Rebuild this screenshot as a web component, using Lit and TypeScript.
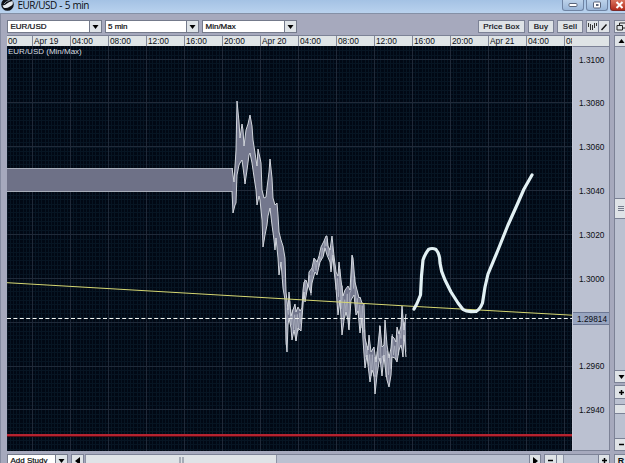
import { LitElement, html, svg, css } from 'lit';
import { customElement, property } from 'lit/decorators.js';

type Point = [number, number];

const TIMES = ['00', 'Apr 19', '04:00', '08:00', '12:00', '16:00', '20:00', 'Apr 20', '04:00',
  '08:00', '12:00', '16:00', '20:00', 'Apr 21', '04:00', '08:00'];

const PRICES = ['1.3100', '1.3080', '1.3060', '1.3040', '1.3020', '1.3000', '', '1.2960', '1.2940'];

// upper and lower edge of the min/max band, in window coordinates
const MAX: Point[] = [[232, 168], [234, 182], [236, 150], [237, 101], [239, 122], [240, 138], [242, 124],
  [243, 130], [244, 146], [246, 130], [248, 124], [250, 115], [252, 126], [253, 140], [255, 153],
  [257, 166], [258, 149], [260, 158], [261, 163], [262, 190], [264, 198], [266, 197], [267, 188], [269, 172],
  [270, 159], [272, 178], [273, 198], [275, 205], [277, 203], [278, 215], [279, 232], [281, 240],
  [283, 246], [285, 258], [286, 292], [288, 310], [289, 292], [291, 316], [293, 310], [295, 304],
  [296, 312], [298, 307], [300, 311], [302, 308], [303, 290], [304, 282], [306, 280], [308, 286],
  [309, 272], [312, 268], [314, 258], [317, 262], [319, 256], [321, 247], [324, 241], [326, 236],
  [327, 236], [328, 246], [330, 250], [332, 236], [334, 256], [336, 272], [338, 276], [339, 262],
  [341, 280], [343, 296], [345, 290], [348, 286], [350, 290], [352, 255], [353, 258], [355, 282],
  [357, 290], [359, 298], [360, 297], [362, 303], [364, 304], [365, 338], [368, 350], [369, 335],
  [371, 352], [374, 347], [376, 362], [378, 345], [380, 326], [382, 347], [384, 345], [385, 320],
  [387, 345], [389, 358], [391, 348], [392, 336], [394, 338], [396, 342], [397, 327], [399, 334],
  [401, 326], [402, 306], [404, 330], [406, 314]];

const MIN: Point[] = [[232, 191], [233, 213], [235, 205], [236, 203], [237, 175], [239, 165], [240, 163],
  [242, 160], [244, 175], [245, 184], [247, 170], [249, 155], [250, 153], [252, 163], [254, 177],
  [256, 190], [257, 205], [259, 196], [260, 200], [262, 220], [263, 247], [265, 235], [267, 225],
  [268, 216], [270, 208], [272, 225], [274, 240], [275, 250], [276, 238], [278, 258], [279, 275],
  [281, 262], [283, 288], [285, 300], [286, 340], [287, 352], [288, 325], [289, 318], [291, 328],
  [292, 340], [294, 330], [296, 341], [298, 328], [301, 331], [303, 305], [304, 292], [305, 302],
  [308, 285], [311, 293], [312, 283], [315, 272], [317, 275], [320, 262], [323, 257], [325, 248],
  [327, 255], [330, 262], [331, 272], [333, 255], [334, 270], [336, 288], [338, 315], [340, 300],
  [342, 335], [344, 320], [346, 312], [348, 320], [349, 330], [351, 300], [354, 295], [356, 315],
  [358, 311], [360, 333], [362, 318], [363, 340], [365, 368], [367, 355], [368, 365], [370, 382],
  [372, 370], [374, 375], [375, 394], [377, 375], [379, 362], [380, 358], [382, 376], [384, 355],
  [385, 366], [387, 380], [389, 387], [391, 375], [392, 357], [395, 358], [397, 362], [399, 350],
  [401, 345], [402, 350], [403, 357], [404, 335], [406, 357]];

const valueAt = (points: Point[], x: number) => {
  const i = Math.max(1, points.findIndex(p => p[0] >= x));
  const [x0, y0] = points[i - 1];
  const [x1, y1] = points[i];
  return y0 + (y1 - y0) * (x - x0) / (x1 - x0);
};

const toPath = (points: Point[]) => points.map(p => p.join(',')).join(' ');

// tick noise that bounces between both edges
const ticks = () => {
  const points: Point[] = [];
  for (let x = 286, i = 0; x <= 406; x += 1.25, i++) {
    const top = valueAt(MAX, x);
    const bottom = valueAt(MIN, x);
    const inset = (bottom - top) * (((i * 7) % 5) * 0.11 - 0.1);
    points.push([x, i % 2 ? top + inset : bottom - inset]);
  }
  return points;
};

@customElement('select-box')
class SelectBox extends LitElement {
  @property() label = '';

  render() {
    return html`
      <span class="value">${this.label}</span>
      <span class="drop"><svg width="7" height="4"><path d="M0.5 0H6.5L3.5 4Z"/></svg></span>
    `;
  }

  static styles = css`
    :host {
      display: flex;
      box-sizing: border-box;
      height: 13px;
      border: 1px solid #747a8b;
      background: #fff;
      overflow: hidden;
    }
    .value {
      flex: 1;
      padding-left: 2.500px;
      line-height: 12px;
      white-space: nowrap;
      -webkit-text-stroke: 0.2px #000;
    }
    .drop {
      display: flex;
      align-items: center;
      justify-content: center;
      width: 11px;
      border-left: 1px solid #747a8b;
      background: #dfe4e8;
    }
  `;
}

@customElement('app-root')
class AppRoot extends LitElement {

  renderGrid() {
    const lines = [];
    for (let x = 32 - 38; x < 572; x += 38 / 12) {
      lines.push(svg`<path class="minor" d="M${Math.round(x) + 0.5} 46V451"/>`);
    }
    for (let y = 59 - 4.38 * 2; y < 451; y += 4.38) {
      lines.push(svg`<path class="minor" d="M7 ${Math.round(y) + 0.5}H572"/>`);
    }
    for (let x = 32; x < 572; x += 38) {
      lines.push(svg`<path class="major" d="M${x + 0.5} 46V451"/>`);
    }
    for (let i = 0; i < 9; i++) {
      lines.push(svg`<path class="major" d="M7 ${Math.round(58.6 + i * 43.85) + 0.5}H572"/>`);
    }
    return lines;
  }

  renderChart() {
    const outline = [...MAX, ...[...MIN].reverse()];
    return html`
      <svg class="plot" width="565" height="405" viewBox="7 46 565 405">
        ${this.renderGrid()}
        <rect x="6" y="168" width="227" height="23" fill="#6e7187"/>
        <path d="M7 168.5H233M7 191.5H232" stroke="#a7adb9"/>
        <polygon points=${toPath(outline)} fill="#73778d"/>
        <polyline class="ticks" points=${toPath(ticks())}/>
        <polyline class="edge" points=${toPath(MAX)}/>
        <polyline class="edge" points=${toPath(MIN)}/>
        <path d="M7 282.7L260 297.4L400 305.6L572 315.2" stroke="#d6d772" fill="none"/>
        <path d="M7 318.5H572" stroke="#f4f6f2" stroke-dasharray="4 2.4"/>
        <path d="M7 436.5H572" stroke="#520b16"/>
        <path d="M7 435H572" stroke="#b5232f" stroke-width="2"/>
        <path class="forecast" d="M414 309L417 303.500L420.500 295L421.500 276L423 260
          Q425 254 428.500 249.500Q432 247.500 436 249.500Q440 254 440 263Q441 272 445 280
          L451 292L458 303L463 309.500Q466 311.500 471 311.700L476 311.500Q480 309.500 482.500 303
          L485 287L488 274L498 250L508 225L517 205L524 189L532 175"/>
      </svg>
    `;
  }

  render() {
    return html`
      <div class="title">
        <svg class="logo" width="14" height="13" viewBox="0 0 14 13">
          <circle cx="6.500" cy="4.500" r="6.300" fill="#101319"/>
          <path d="M1.500 5.500Q4 5.500 6 3.500T11.500 1Q13 5 9 6.500Q5 9 2.500 7.500Z" fill="#e3e9ef"/>
          <path d="M3 4Q5 1 9 0" stroke="#8090a0" fill="none"/>
        </svg>
        <span class="caption">EUR/USD - 5 min</span>
        <span class="win"><svg width="10" height="6"><rect x="1" y="1.500" width="8" height="3" rx="1" fill="#fff" stroke="#59657b"/></svg></span>
        <span class="win"><svg width="10" height="8"><rect x="1.500" y="1" width="7" height="6" rx="1" fill="#fff" stroke="#59657b"/><rect x="4" y="3" width="2.500" height="2" fill="#59657b"/></svg></span>
        <span class="win close"><svg width="9" height="8"><path d="M1.500 1L7.500 7M7.500 1L1.500 7" stroke="#fff" stroke-width="2"/></svg></span>
      </div>
      <div class="body">
        <div class="main">
          <div class="toolbar">
            <select-box class="pick" label="EUR/USD"></select-box>
            <select-box class="pick" label="5 min"></select-box>
            <select-box class="pick" label="Min/Max"></select-box>
            <div class="actions">
              <span class="btn price">Price Box</span>
              <span class="btn">Buy</span>
              <span class="btn">Sell</span>
              <span class="tools">
                <span class="tool"><svg width="10" height="9"><path d="M1.500 1V5M3.500 2V8M5.500 3V8M7.500 1V6M9.500 1V4" stroke="#333"/></svg></span>
                <span class="tool"><svg width="8" height="8"><path d="M1.500 7L6.500 1.500" stroke="#111" stroke-width="1.400"/></svg></span>
              </span>
            </div>
          </div>
          <div class="times">
            ${TIMES.map(t => html`<span class="time">${t}</span>`)}
          </div>
          <div class="corner"></div>
          <div class="chart">
            ${this.renderChart()}
            <span class="study">EUR/USD (Min/Max)</span>
          </div>
          <div class="prices">
            ${PRICES.map(p => html`<span class="tick">${p}</span>`)}
            <span class="last">1.29814</span>
          </div>
          <div class="bottom">
            <select-box class="add" label="Add Study"></select-box>
            <span class="key left"><svg width="5" height="8"><path d="M5 0V8L0 4Z"/></svg></span>
            <span class="track"><span class="thumb"><svg width="5" height="7"><path d="M1 0V7M4 0V7" stroke="#6d7486"/></svg></span></span>
            <span class="key right"><svg width="5" height="8"><path d="M0 0V8L5 4Z"/></svg></span>
            <span class="key minus"><svg width="7" height="7"><path d="M1 3.500H6" stroke="#000" stroke-width="1.500"/></svg></span>
            <span class="track zoom"><span class="grip"></span></span>
            <span class="key plus"><svg width="7" height="7"><path d="M1 3.500H6M3.500 1V6" stroke="#000" stroke-width="1.500"/></svg></span>
          </div>
        </div>
        <div class="side">
          <span class="cell popup"><svg width="10" height="9"><path d="M3.500 1H9.500V6H3.500Z" fill="#e1e5e8" stroke="#222"/><path d="M1 3.500H6.500V8H1Z" fill="#e1e5e8" stroke="#222"/></svg></span>
          <span class="cell up"><svg width="7" height="4"><path d="M0.500 4H6.500L3.500 0Z"/></svg></span>
          <span class="vtrack above"></span>
          <span class="cell vthumb"><svg width="6" height="6"><path d="M0 0.500H6M0 2.500H6M0 4.500H6" stroke="#747a8b"/></svg></span>
          <span class="vtrack below"></span>
          <span class="cell down"><svg width="7" height="4"><path d="M0.500 0H6.500L3.500 4Z"/></svg></span>
          <span class="cell vplus"><svg width="7" height="7"><path d="M1 3.500H6M3.500 1V6" stroke="#000" stroke-width="1.500"/></svg></span>
          <span class="vtrack short"></span>
          <span class="cell vgrip"></span>
          <span class="vtrack rest"></span>
          <span class="cell vminus"><svg width="7" height="7"><path d="M1 3.500H6" stroke="#000" stroke-width="1.500"/></svg></span>
          <span class="cell reset">R</span>
        </div>
      </div>
    `;
  }

  static styles = css`
    :host {
      display: flex;
      flex-direction: column;
      width: 625px;
      height: 463px;
      overflow: hidden;
      background: #a6a9bd;
      color: #0c0e12;
      font: 8px "Liberation Sans", Arial, sans-serif;
    }
    svg {
      display: block;
      flex: none;
    }
    .title {
      display: flex;
      flex: none;
      box-sizing: border-box;
      height: 14px;
      padding-left: 1px;
      background: linear-gradient(#a4c2e4, #b9d2ee);
      border-bottom: 1px solid #8490a6;
    }
    .caption {
      flex: 1;
      padding-left: 2.500px;
      font: 10px/11px "Open Sans", "Noto Sans", sans-serif;
      letter-spacing: -0.5px;
      word-spacing: 0.5px;
    }
    .win {
      display: flex;
      align-items: center;
      justify-content: center;
      box-sizing: border-box;
      width: 22px;
      height: 11px;
      margin-right: 2px;
      border: 1px solid #6f84a4;
      border-top: 0;
      border-radius: 0 0 3px 3px;
      background: linear-gradient(#bcd2ea, #9ab6d8);
    }
    .close {
      width: 15px;
      margin-right: 0;
      padding-left: 3px;
      border-color: #7c2b2b;
      border-right: 0;
      border-radius: 0 0 0 3px;
      background: linear-gradient(#d9735e, #b32b1c);
    }
    .body {
      display: flex;
      flex: 1;
      gap: 4px;
      padding: 6px 0 0 6px;
      border-left: 1px solid #858ba0;
    }
    .main {
      display: grid;
      flex: none;
      grid-template-columns: 565px 38px;
      grid-template-rows: 15px 11px 405px 12px;
    }
    .toolbar {
      display: flex;
      grid-column: 1 / 3;
      gap: 3px;
    }
    .pick {
      width: 94.500px;
    }
    .actions {
      display: flex;
      gap: 3px;
      margin-left: auto;
    }
    .btn, .tools, .key, .cell {
      box-sizing: border-box;
      border: 1px solid #7c8296;
      background: #dfe3e7;
      text-align: center;
    }
    .btn {
      width: 26px;
      height: 13px;
      line-height: 12px;
      letter-spacing: 0.25px;
      -webkit-text-stroke: 0.2px #0c0e12;
    }
    .price {
      width: 47px;
    }
    .tools {
      display: flex;
      width: 24px;
      height: 13px;
    }
    .tool {
      display: flex;
      flex: 1;
      align-items: center;
      justify-content: center;
    }
    .tool + .tool {
      border-left: 1px solid #7c8296;
    }
    .times {
      display: flex;
      box-sizing: border-box;
      overflow: hidden;
      border-top: 1px solid #7c8296;
      background: #dfe4e6;
    }
    .time {
      flex: none;
      box-sizing: border-box;
      width: 38px;
      padding-left: 1px;
      border-left: 1px solid #83899a;
      font-size: 8.300px;
      line-height: 11px;
      white-space: nowrap;
    }
    .time:first-child {
      width: 25px;
      padding-left: 1px;
      border-left: 0;
    }
    .corner {
      border: 1px solid #7c8296;
      border-width: 1px 1px 0 0;
      background: #dfe4e6;
    }
    .chart {
      position: relative;
      background: #010814;
    }
    .minor {
      stroke: #071523;
    }
    .major {
      stroke: #202a39;
    }
    .edge, .ticks {
      fill: none;
      stroke: #d2d6dd;
      stroke-width: 1;
    }
    .ticks {
      stroke: #b4b9c6;
      stroke-width: 0.700;
    }
    .forecast {
      fill: none;
      stroke: #e2f0f3;
      stroke-width: 3.200;
      stroke-linecap: round;
      stroke-linejoin: round;
    }
    .study {
      position: absolute;
      left: 1px;
      top: 0;
      color: #d8dde0;
      line-height: 11px;
    }
    .prices {
      position: relative;
      box-sizing: border-box;
      padding-top: 7.500px;
      border: 1px solid #7c8296;
      border-left-color: #c5cad8;
      background: #bbc1d1;
      overflow: hidden;
      font-size: 8.300px;
    }
    .tick {
      display: block;
      height: 43.850px;
      padding-left: 6px;
      line-height: 10px;
    }
    .last {
      position: absolute;
      left: 0;
      right: 0;
      top: 265px;
      height: 11px;
      border: 1px solid #6d7894;
      border-width: 1px 0;
      background: #98a5c0;
      line-height: 12px;
      padding-left: 4px;
    }
    .bottom {
      display: flex;
      grid-column: 1 / 3;
      padding-top: 3px;
    }
    .add {
      width: 61px;
      margin-right: 3px;
    }
    .key, .cell {
      display: flex;
      flex: none;
      align-items: center;
      justify-content: center;
    }
    .key {
      height: 13px;
    }
    .left {
      width: 13px;
      margin-right: 1px;
    }
    .right {
      width: 12px;
      margin-right: 3px;
    }
    .minus {
      width: 13px;
    }
    .plus {
      width: 12px;
    }
    .track {
      flex: 1;
      box-sizing: border-box;
      height: 13px;
      border-top: 1px solid #7c8296;
      background: #bbc1d1;
    }
    .thumb {
      display: flex;
      align-items: center;
      justify-content: center;
      box-sizing: border-box;
      width: 192px;
      height: 12px;
      border: 1px solid #8d93a5;
      border-top: 0;
      background: #dfe3e7;
    }
    .zoom {
      flex: none;
      width: 41px;
    }
    .grip {
      display: block;
      width: 6px;
      height: 12px;
      border-right: 1px solid #8d93a5;
      background: #dfe3e7;
    }
    .side {
      display: flex;
      flex: none;
      flex-direction: column;
      width: 14px;
    }
    .popup {
      height: 13px;
      margin-bottom: 2px;
    }
    .up {
      height: 12px;
    }
    .vtrack {
      flex: none;
      box-sizing: border-box;
      border-left: 1px solid #7c8296;
      background: #bbc1d1;
    }
    .above {
      height: 151px;
    }
    .vthumb {
      height: 21px;
    }
    .below {
      height: 151px;
    }
    .down {
      height: 13px;
      margin-bottom: 2px;
    }
    .vplus {
      height: 14px;
    }
    .short {
      height: 5px;
    }
    .vgrip {
      height: 10px;
    }
    .rest {
      height: 24px;
    }
    .vminus {
      height: 13px;
      margin-bottom: 3px;
    }
    .reset {
      height: 13px;
      font-weight: bold;
      font-size: 9px;
    }
  `;
}
